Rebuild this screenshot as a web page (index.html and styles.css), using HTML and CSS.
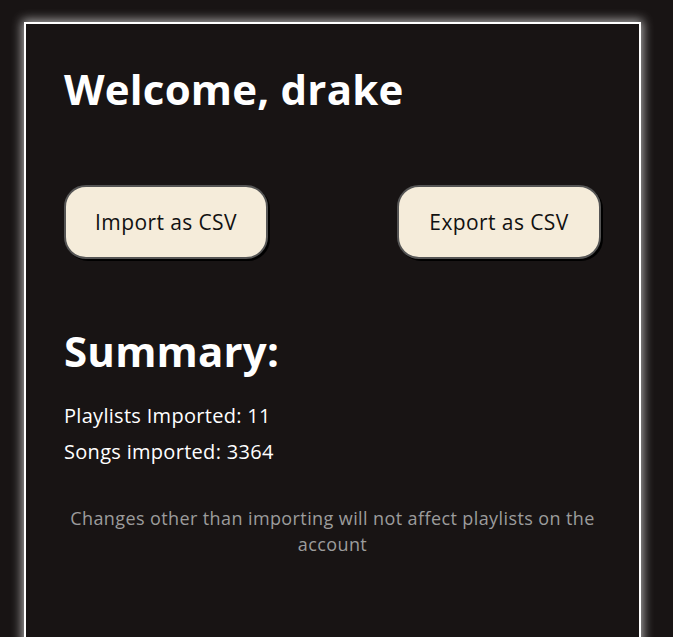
FILE: index.html
```html
<!DOCTYPE html>
<html lang="en">
<head>
<meta charset="utf-8">
<title>Welcome</title>
<link rel="stylesheet" href="styles.css">
</head>
<body>
<main class="card">
  <h1 class="title">Welcome, drake</h1>
  <div class="actions">
    <button class="btn">Import as CSV</button>
    <button class="btn">Export as CSV</button>
  </div>
  <h2 class="title summary">Summary:</h2>
  <p class="stat">Playlists Imported: 11</p>
  <p class="stat">Songs imported: 3364</p>
  <p class="note">Changes other than importing will not affect playlists on the account</p>
</main>
</body>
</html>
```
FILE: styles.css
```css
html, body {
  margin: 0;
  padding: 0;
  background: #181414;
  overflow: hidden;
}
body {
  padding: 22px 0 0 24px;
  font-family: "Open Sans", "DejaVu Sans", sans-serif;
  color: #ffffff;
}
.card {
  box-sizing: border-box;
  width: 617px;
  height: 700px;
  border: 2px solid #ffffff;
  box-shadow: 0 0 10px 2px rgba(255, 255, 255, 0.65);
  background: #181414;
  padding: 41px 38px 0 38px;
}
.title {
  margin: 0;
  font-size: 42px;
  line-height: 48px;
  font-weight: 700;
  letter-spacing: 0.2px;
}
.actions {
  display: flex;
  justify-content: space-between;
  margin-top: 72px;
}
.btn {
  box-sizing: border-box;
  width: 204px;
  height: 74px;
  border-radius: 22px;
  background: #f5ecda;
  color: #111;
  border: 2px solid #555;
  box-shadow: 2px 2px 0 #000;
  font-family: inherit;
  font-size: 21px;
  letter-spacing: 0.4px;
  padding: 0;
}
.summary {
  margin-top: 68px;
}
.stat {
  margin: 0;
  font-size: 20px;
  line-height: 36px;
  letter-spacing: 0.3px;
}
.summary + .stat {
  margin-top: 23px;
}
.note {
  margin: 35px 0 0;
  text-align: center;
  color: #9c9c9c;
  font-size: 18px;
  line-height: 26px;
  letter-spacing: 0.4px;
}
```
